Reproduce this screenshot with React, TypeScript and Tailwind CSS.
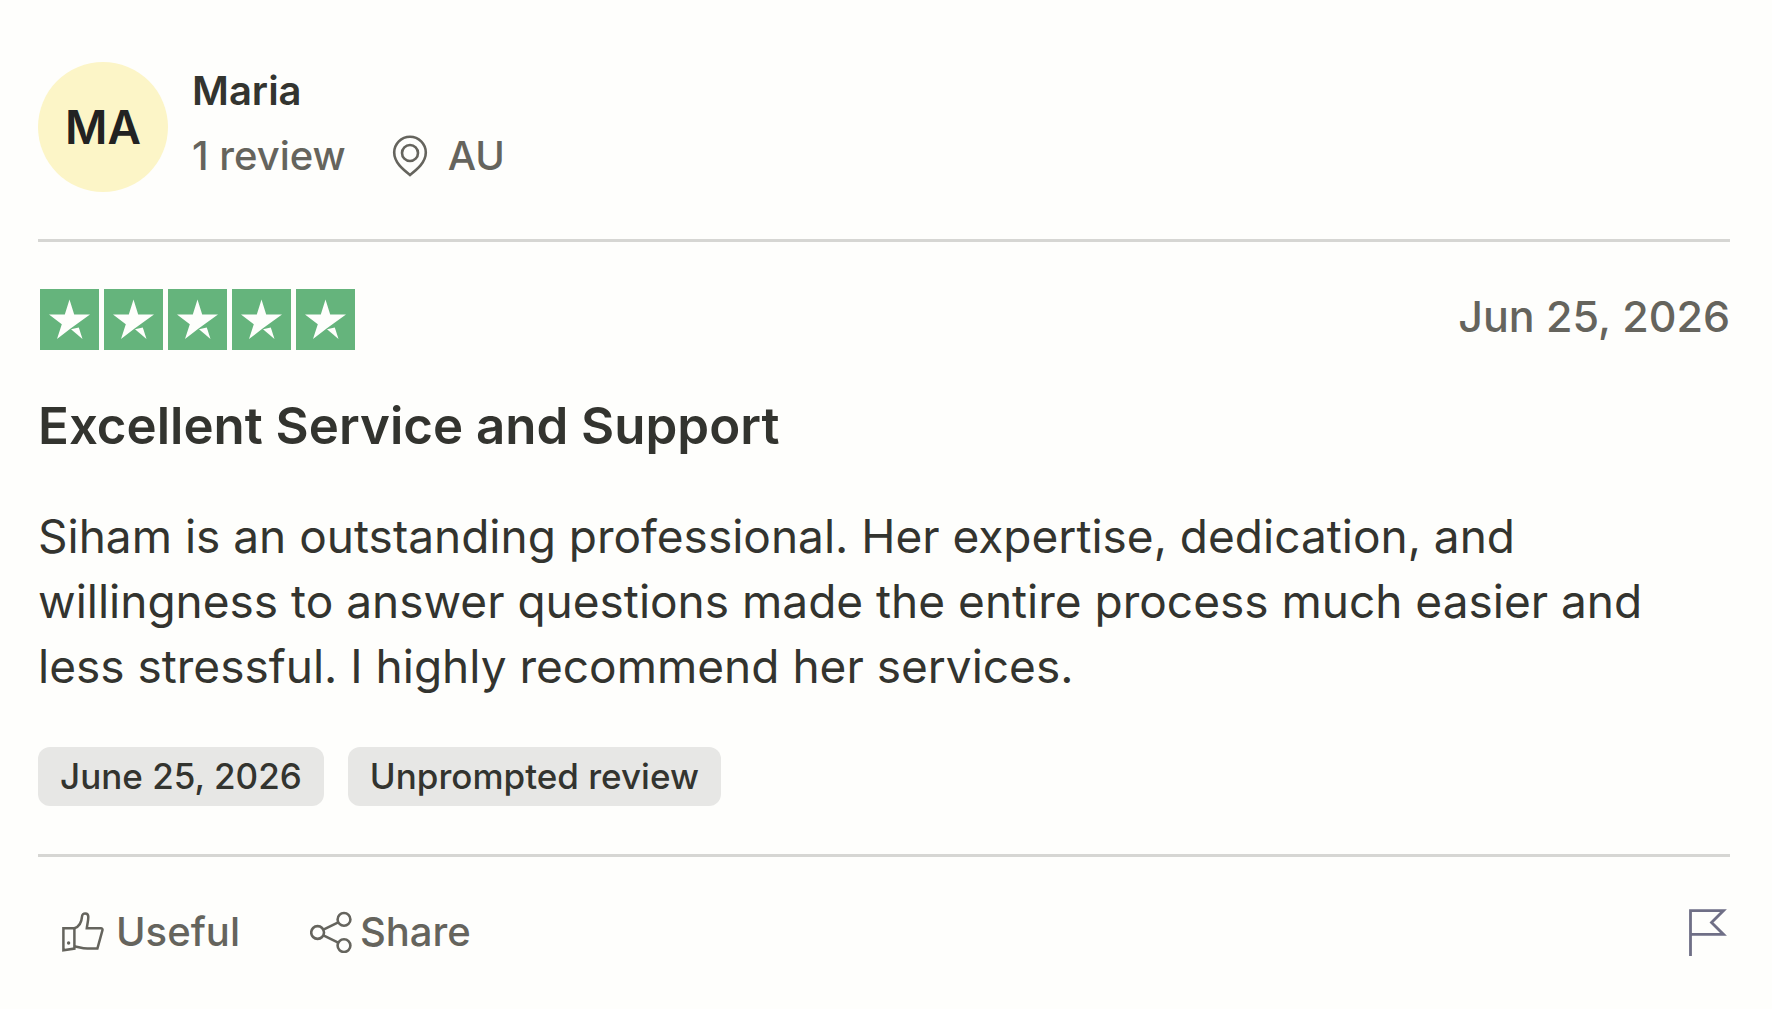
import React from 'react';

interface Review {
  initials: string;
  name: string;
  reviewCount: string;
  country: string;
  rating: number;
  date: string;
  title: string;
  body: string;
  tags: string[];
}

const review: Review = {
  initials: 'MA',
  name: 'Maria',
  reviewCount: '1 review',
  country: 'AU',
  rating: 5,
  date: 'Jun 25, 2026',
  title: 'Excellent Service and Support',
  body: 'Siham is an outstanding professional. Her expertise, dedication, and willingness to answer questions made the entire process much easier and less stressful. I highly recommend her services.',
  tags: ['June 25, 2026', 'Unprompted review'],
};

const StarIcon = () => (
  <svg width="59" height="61" viewBox="0 0 59 61" aria-hidden="true">
    <rect width="59" height="61" fill="#65b47c" />
    <path d="M29.5 10.5 34.2 25.5H50L30.6 39.6 17 50 21.8 35.2 9 25.5H24.8Z" fill="#fefefc" />
    <path d="M31 40.2 38.8 38.4 42.5 50Z" fill="#fefefc" />
  </svg>
);

const PinIcon = () => (
  <svg width="36" height="42" viewBox="0 0 36 42" fill="none" stroke="currentColor" strokeWidth="2.6" aria-hidden="true">
    <path d="M18 40C11 34.5 2.2 27.5 2.2 17.6a15.8 15.8 0 0 1 31.6 0C33.8 27.5 25 34.5 18 40Z" />
    <circle cx="18" cy="18" r="8" />
  </svg>
);

const ThumbIcon = () => (
  <svg width="42" height="40" viewBox="6 6 42 40" fill="none" stroke="currentColor" strokeWidth="2.5" aria-hidden="true">
    <path d="M7.4 22.2H18.4V42.6L7.4 44.2Z" />
    <path d="M18.4 22.2C23.5 20.6 25.6 16 26 10.6c.2-4.4 6.4-4.2 6.3.4 0 4-1 7-1.5 11.2H44.8c1.4 0 2 1 1.6 2.2L41.4 42.6H31.4C26.4 42.6 23.4 41.2 18.4 40.2" />
    <circle cx="12.6" cy="37" r="1.7" fill="currentColor" stroke="none" />
  </svg>
);

const ShareIcon = () => (
  <svg width="42" height="42" viewBox="9 4 42 42" fill="none" stroke="currentColor" strokeWidth="2.6" aria-hidden="true">
    <circle cx="16.6" cy="25.5" r="6.4" />
    <circle cx="43" cy="12.4" r="6.4" />
    <circle cx="43" cy="38.6" r="6.4" />
    <path d="M22.4 22.6 37.2 15.3M22.4 28.4 37.2 35.7" />
  </svg>
);

const FlagIcon = () => (
  <svg width="42" height="48" viewBox="0 0 42 48" fill="none" stroke="currentColor" strokeWidth="2.8" aria-hidden="true">
    <path d="M2.5 48V2.6H35.5L23.5 14.6 35.5 26.4H2.5" />
  </svg>
);

export default function App() {
  return (
    <main className="min-h-screen bg-[#fefefc] pt-[58px] pr-[42px] pl-[38px] font-['Inter','Liberation_Sans',sans-serif] text-[#33342f]">
      <article>
        <header className="flex items-start gap-6 border-b-3 border-[#d6d6d3] pb-[47px]">
          <div className="mt-1 flex size-[130px] items-center justify-center rounded-full bg-[#fcf5c7] text-[46px] font-semibold text-[#222222]">
            {review.initials}
          </div>
          <div className="text-[40px] leading-[65px]">
            <p className="font-semibold">{review.name}</p>
            <p className="flex items-center font-medium text-[#65645d]">
              <span>{review.reviewCount}</span>
              <span className="ml-[46px] flex items-center gap-5">
                <PinIcon />
                {review.country}
              </span>
            </p>
          </div>
        </header>

        <div className="mt-[47px] flex items-start justify-between">
          <div className="flex gap-[5px] pl-0.5" role="img" aria-label={`Rated ${review.rating} out of 5 stars`}>
            {Array.from({ length: review.rating }, (_, i) => (
              <StarIcon key={i} />
            ))}
          </div>
          <time className="text-[43px] leading-[54px] font-medium text-[#65645d]">{review.date}</time>
        </div>

        <h2 className="mt-[43px] text-[51px] leading-[65px] font-semibold">{review.title}</h2>
        <p className="mt-[46px] text-[46px] leading-[65px]">{review.body}</p>

        <ul className="mt-12 flex gap-6">
          {review.tags.map((tag) => (
            <li key={tag} className="rounded-xl bg-[#e7e7e5] px-[22px] text-[35px] leading-[59px] font-medium">
              {tag}
            </li>
          ))}
        </ul>

        <footer className="mt-12 flex items-center justify-between border-t-3 border-[#d6d6d3] pt-[42px] text-[#65645d]">
          <div className="flex gap-[22px] text-[40px] leading-[65px] font-medium">
            <button type="button" className="flex items-center gap-3 px-6">
              <ThumbIcon />
              Useful
            </button>
            <button type="button" className="flex items-center gap-2 px-6">
              <ShareIcon />
              Share
            </button>
          </div>
          <button type="button" aria-label="Report review" className="text-[#6f6f86]">
            <FlagIcon />
          </button>
        </footer>
      </article>
    </main>
  );
}
